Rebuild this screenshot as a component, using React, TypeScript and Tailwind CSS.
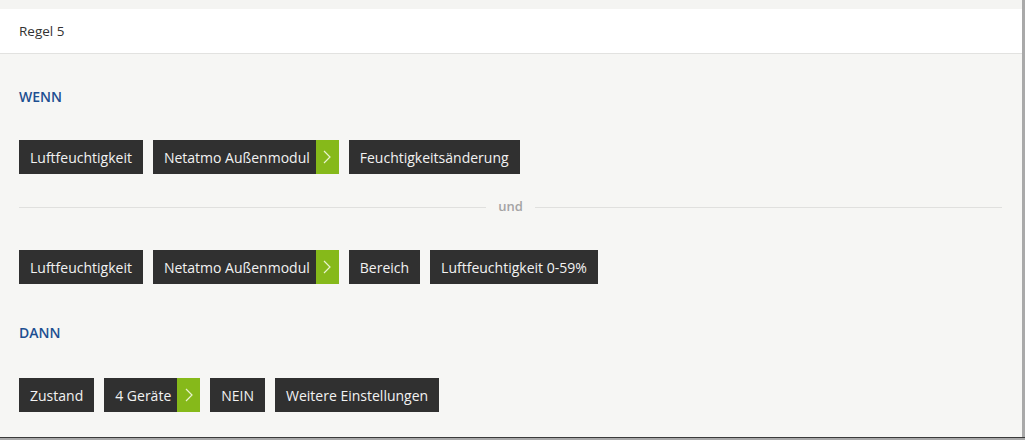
import React from "react";

const Chip = ({ children }: { children: React.ReactNode }) => (
  <div className="h-[34px] flex items-center px-[11px] bg-[#303030] text-[#f2f2f2] text-[14px] whitespace-nowrap">
    {children}
  </div>
);

const Arrow = () => (
  <div className="h-[34px] w-[23px] bg-[#86b91a] flex items-center justify-center">
    <svg width="8" height="14" viewBox="0 0 8 14" fill="none">
      <path d="M1 1 L7 7 L1 13" stroke="#e8f3cf" strokeWidth="1.2" />
    </svg>
  </div>
);

const Split = ({ children }: { children: React.ReactNode }) => (
  <div className="flex">
    <div className="h-[34px] flex items-center pl-[11px] pr-[6px] bg-[#303030] text-[#f2f2f2] text-[14px] whitespace-nowrap">
      {children}
    </div>
    <Arrow />
  </div>
);

export default function App() {
  return (
    <div
      className="w-[1025px] h-[440px] bg-[#f6f6f4] flex flex-col"
      style={{ fontFamily: '"Open Sans", "Noto Sans", sans-serif' }}
    >
      <div className="flex flex-1 min-h-0">
        <div className="flex-1 flex flex-col">
          <div className="h-[9px] bg-[#f4f4f2]" />
          <div className="h-[45px] bg-white border-b border-[#e2e2e0] flex items-center pl-[19px] text-[13.5px] text-[#333]">
            Regel 5
          </div>
          <div className="pl-[19px] pr-[20px] flex flex-col">
            <div className="mt-[33px] h-[20px] leading-[20px] text-[14px] font-semibold text-[#1d4f91]">WENN</div>
            <div className="mt-[33px] flex gap-[10px]">
              <Chip>Luftfeuchtigkeit</Chip>
              <Split>Netatmo Außenmodul</Split>
              <Chip>Feuchtigkeitsänderung</Chip>
            </div>
            <div className="mt-[23px] h-[20px] flex items-center">
              <div className="flex-1 h-px bg-[#e0e0de]" />
              <div className="px-[12px] text-[13px] font-semibold text-[#a4a4a4]">und</div>
              <div className="flex-1 h-px bg-[#e0e0de]" />
            </div>
            <div className="mt-[33px] flex gap-[10px]">
              <Chip>Luftfeuchtigkeit</Chip>
              <Split>Netatmo Außenmodul</Split>
              <Chip>Bereich</Chip>
              <Chip>Luftfeuchtigkeit 0-59%</Chip>
            </div>
            <div className="mt-[39px] h-[20px] leading-[20px] text-[14px] font-semibold text-[#1d4f91]">DANN</div>
            <div className="mt-[35px] flex gap-[10px]">
              <Chip>Zustand</Chip>
              <Split>4 Geräte</Split>
              <Chip>NEIN</Chip>
              <Chip>Weitere Einstellungen</Chip>
            </div>
          </div>
        </div>
        <div className="w-[3px] bg-[#a9a9a9]" />
      </div>
      <div className="h-px bg-[#3a3a3a]" />
      <div className="h-[2px] bg-[#a9a9a9]" />
    </div>
  );
}
